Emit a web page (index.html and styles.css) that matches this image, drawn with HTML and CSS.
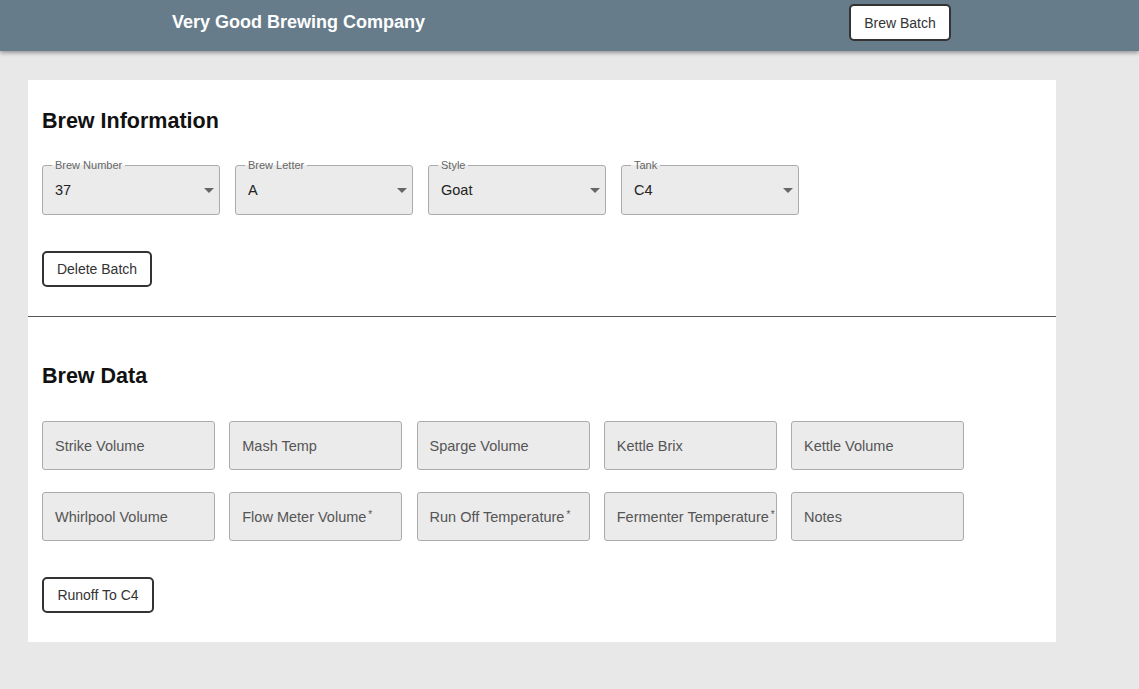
FILE: index.html
```html
<!DOCTYPE html>
<html lang="en">
<head>
<meta charset="utf-8">
<title>Very Good Brewing Company</title>
<link rel="stylesheet" href="styles.css">
</head>
<body>
<header class="topbar">
  <div class="brand">Very Good Brewing Company</div>
  <button class="btn btn-top">Brew Batch</button>
</header>
<main class="card">
  <section class="section section-info">
    <h2 class="heading">Brew Information</h2>
    <div class="selects">
      <div class="select"><span class="select-label">Brew Number</span><span class="select-value">37</span><span class="caret"></span></div>
      <div class="select"><span class="select-label">Brew Letter</span><span class="select-value">A</span><span class="caret"></span></div>
      <div class="select"><span class="select-label">Style</span><span class="select-value">Goat</span><span class="caret"></span></div>
      <div class="select"><span class="select-label">Tank</span><span class="select-value">C4</span><span class="caret"></span></div>
    </div>
    <button class="btn btn-action btn-delete">Delete Batch</button>
  </section>
  <hr class="divider">
  <section class="section section-data">
    <h2 class="heading">Brew Data</h2>
    <div class="inputs">
      <div class="input">Strike Volume</div>
      <div class="input">Mash Temp</div>
      <div class="input">Sparge Volume</div>
      <div class="input">Kettle Brix</div>
      <div class="input">Kettle Volume</div>
      <div class="input">Whirlpool Volume</div>
      <div class="input">Flow Meter Volume<span class="req">*</span></div>
      <div class="input">Run Off Temperature<span class="req">*</span></div>
      <div class="input">Fermenter Temperature<span class="req">*</span></div>
      <div class="input">Notes</div>
    </div>
    <button class="btn btn-action btn-runoff">Runoff To C4</button>
  </section>
</main>
</body>
</html>
```
FILE: styles.css
```css
* { box-sizing: border-box; }
html, body { margin: 0; padding: 0; }
body {
  background: #e8e8e8;
  font-family: "Liberation Sans", Arial, sans-serif;
  color: #222;
  height: 689px;
  overflow: hidden;
}
.topbar {
  height: 51px;
  background: #667c8b;
  display: flex;
  align-items: flex-start;
  justify-content: space-between;
  padding: 0 188px 0 172px;
  box-shadow: 0 2px 4px rgba(0,0,0,0.35);
  position: relative;
  z-index: 1;
}
.brand {
  color: #fff;
  font-weight: bold;
  font-size: 18px;
  line-height: 20px;
  margin-top: 12px;
}
.btn {
  font-family: "Liberation Sans", Arial, sans-serif;
  font-size: 14px;
  color: #333;
  background: #fff;
  border: 2px solid #333;
  border-radius: 5px;
  cursor: pointer;
  white-space: nowrap;
  padding: 0;
}
.btn-top {
  margin-top: 4px;
  width: 102px;
  height: 37px;
}
.card {
  margin: 29px 0 0 28px;
  width: 1028px;
  height: 562px;
  background: #fff;
  display: flex;
  flex-direction: column;
}
.section { padding: 0 14px; display: flex; flex-direction: column; align-items: flex-start; }
.section-info { padding-top: 28px; }
.section-data { padding-top: 46px; }
.heading {
  margin: 0;
  font-size: 21.5px;
  line-height: 26px;
  font-weight: bold;
  color: #111;
}
.selects {
  display: flex;
  gap: 15px;
  margin-top: 31px;
}
.select {
  position: relative;
  width: 178px;
  height: 50px;
  background: #ebebeb;
  border: 1px solid #ababab;
  border-radius: 3px;
  display: flex;
  align-items: center;
  padding: 0 12px;
}
.select-label {
  position: absolute;
  top: -7px;
  left: 9px;
  padding: 0 3px;
  font-size: 11px;
  line-height: 12px;
  color: #666;
  background: linear-gradient(#fff 0 50%, #ebebeb 50% 100%);
}
.select-value {
  flex: 1;
  font-size: 14.5px;
  color: #222;
}
.caret {
  width: 0;
  height: 0;
  border-left: 5px solid transparent;
  border-right: 5px solid transparent;
  border-top: 5px solid #666;
  margin-right: -7px;
}
.btn-action {
  height: 36px;
}
.btn-delete { margin-top: 36px; width: 110px; }
.divider {
  margin: 29px 0 0 0;
  border: 0;
  border-top: 1px solid #555;
  height: 0;
  width: 100%;
}
.inputs {
  margin-top: 32px;
  display: grid;
  grid-template-columns: repeat(5, 173px);
  column-gap: 14.25px;
  row-gap: 22px;
}
.input {
  height: 49px;
  background: #ebebeb;
  border: 1px solid #ababab;
  border-radius: 3px;
  display: flex;
  align-items: center;
  padding: 0 12px;
  font-size: 14.5px;
  color: #555;
  white-space: nowrap;
}
.req {
  font-size: 10px;
  margin-left: 2px;
  position: relative;
  top: -2px;
}
.btn-runoff { margin-top: 36px; width: 112px; }
```
